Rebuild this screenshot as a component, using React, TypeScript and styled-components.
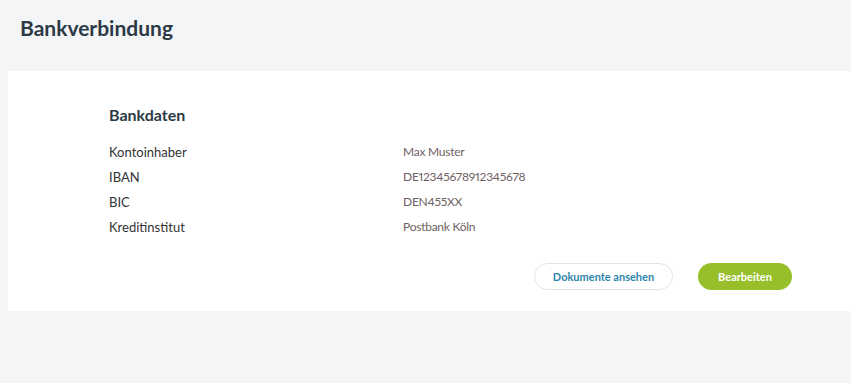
import React from "react";
import styled, { createGlobalStyle } from "styled-components";

const Global = createGlobalStyle`
  html, body { margin: 0; padding: 0; background: #f4f5f7; }
  body { font-family: Lato, "Open Sans", sans-serif; -webkit-font-smoothing: antialiased; }
`;

const Page = styled.div`
  width: 851px;
  min-height: 383px;
  background: #f4f5f7;
  padding-top: 13px;
  box-sizing: border-box;
`;

const Title = styled.h1`
  margin: 0 0 0 20px;
  height: 30px;
  line-height: 30px;
  font-size: 21px;
  font-weight: 700;
  color: #2b3a45;
`;

const Card = styled.section`
  margin: 28px 0 0 8px;
  background: #fff;
  height: 240px;
  box-sizing: border-box;
  padding: 34px 59px 0 101px;
`;

const SectionTitle = styled.h2`
  margin: 0 0 19px;
  font-size: 16px;
  line-height: 20px;
  font-weight: 700;
  color: #2b3a45;
`;

const Rows = styled.dl`
  margin: 0;
  display: grid;
  grid-template-columns: 294px 1fr;
  row-gap: 9px;
`;

const Label = styled.dt`
  margin: 0;
  font-size: 13px;
  line-height: 16px;
  color: #333;
`;

const Value = styled.dd`
  margin: 0;
  font-size: 12px;
  line-height: 16px;
  font-weight: 400;
  letter-spacing: -0.25px;
  font-variant-numeric: proportional-nums;
  color: #6f6262;
`;

const Actions = styled.div`
  display: flex;
  justify-content: flex-end;
  gap: 25px;
  margin-top: 28px;
`;

const Button = styled.button<{ $primary?: boolean }>`
  height: 27px;
  border-radius: 14px;
  font-family: inherit;
  font-size: 11px;
  font-weight: 700;
  cursor: pointer;
  box-sizing: border-box;
  padding: 0;
  width: ${(p) => (p.$primary ? "94px" : "139px")};
  background: ${(p) => (p.$primary ? "#97bf2a" : "#fff")};
  color: ${(p) => (p.$primary ? "#fff" : "#2e86ab")};
  border: ${(p) => (p.$primary ? "none" : "1px solid #dfe3e6")};
`;

const rows: [string, string][] = [
  ["Kontoinhaber", "Max Muster"],
  ["IBAN", "DE12345678912345678"],
  ["BIC", "DEN455XX"],
  ["Kreditinstitut", "Postbank Köln"],
];

export default function App() {
  return (
    <Page>
      <Global />
      <Title>Bankverbindung</Title>
      <Card>
        <SectionTitle>Bankdaten</SectionTitle>
        <Rows>
          {rows.map(([l, v]) => (
            <React.Fragment key={l}>
              <Label>{l}</Label>
              <Value>{v}</Value>
            </React.Fragment>
          ))}
        </Rows>
        <Actions>
          <Button>Dokumente ansehen</Button>
          <Button $primary>Bearbeiten</Button>
        </Actions>
      </Card>
    </Page>
  );
}
